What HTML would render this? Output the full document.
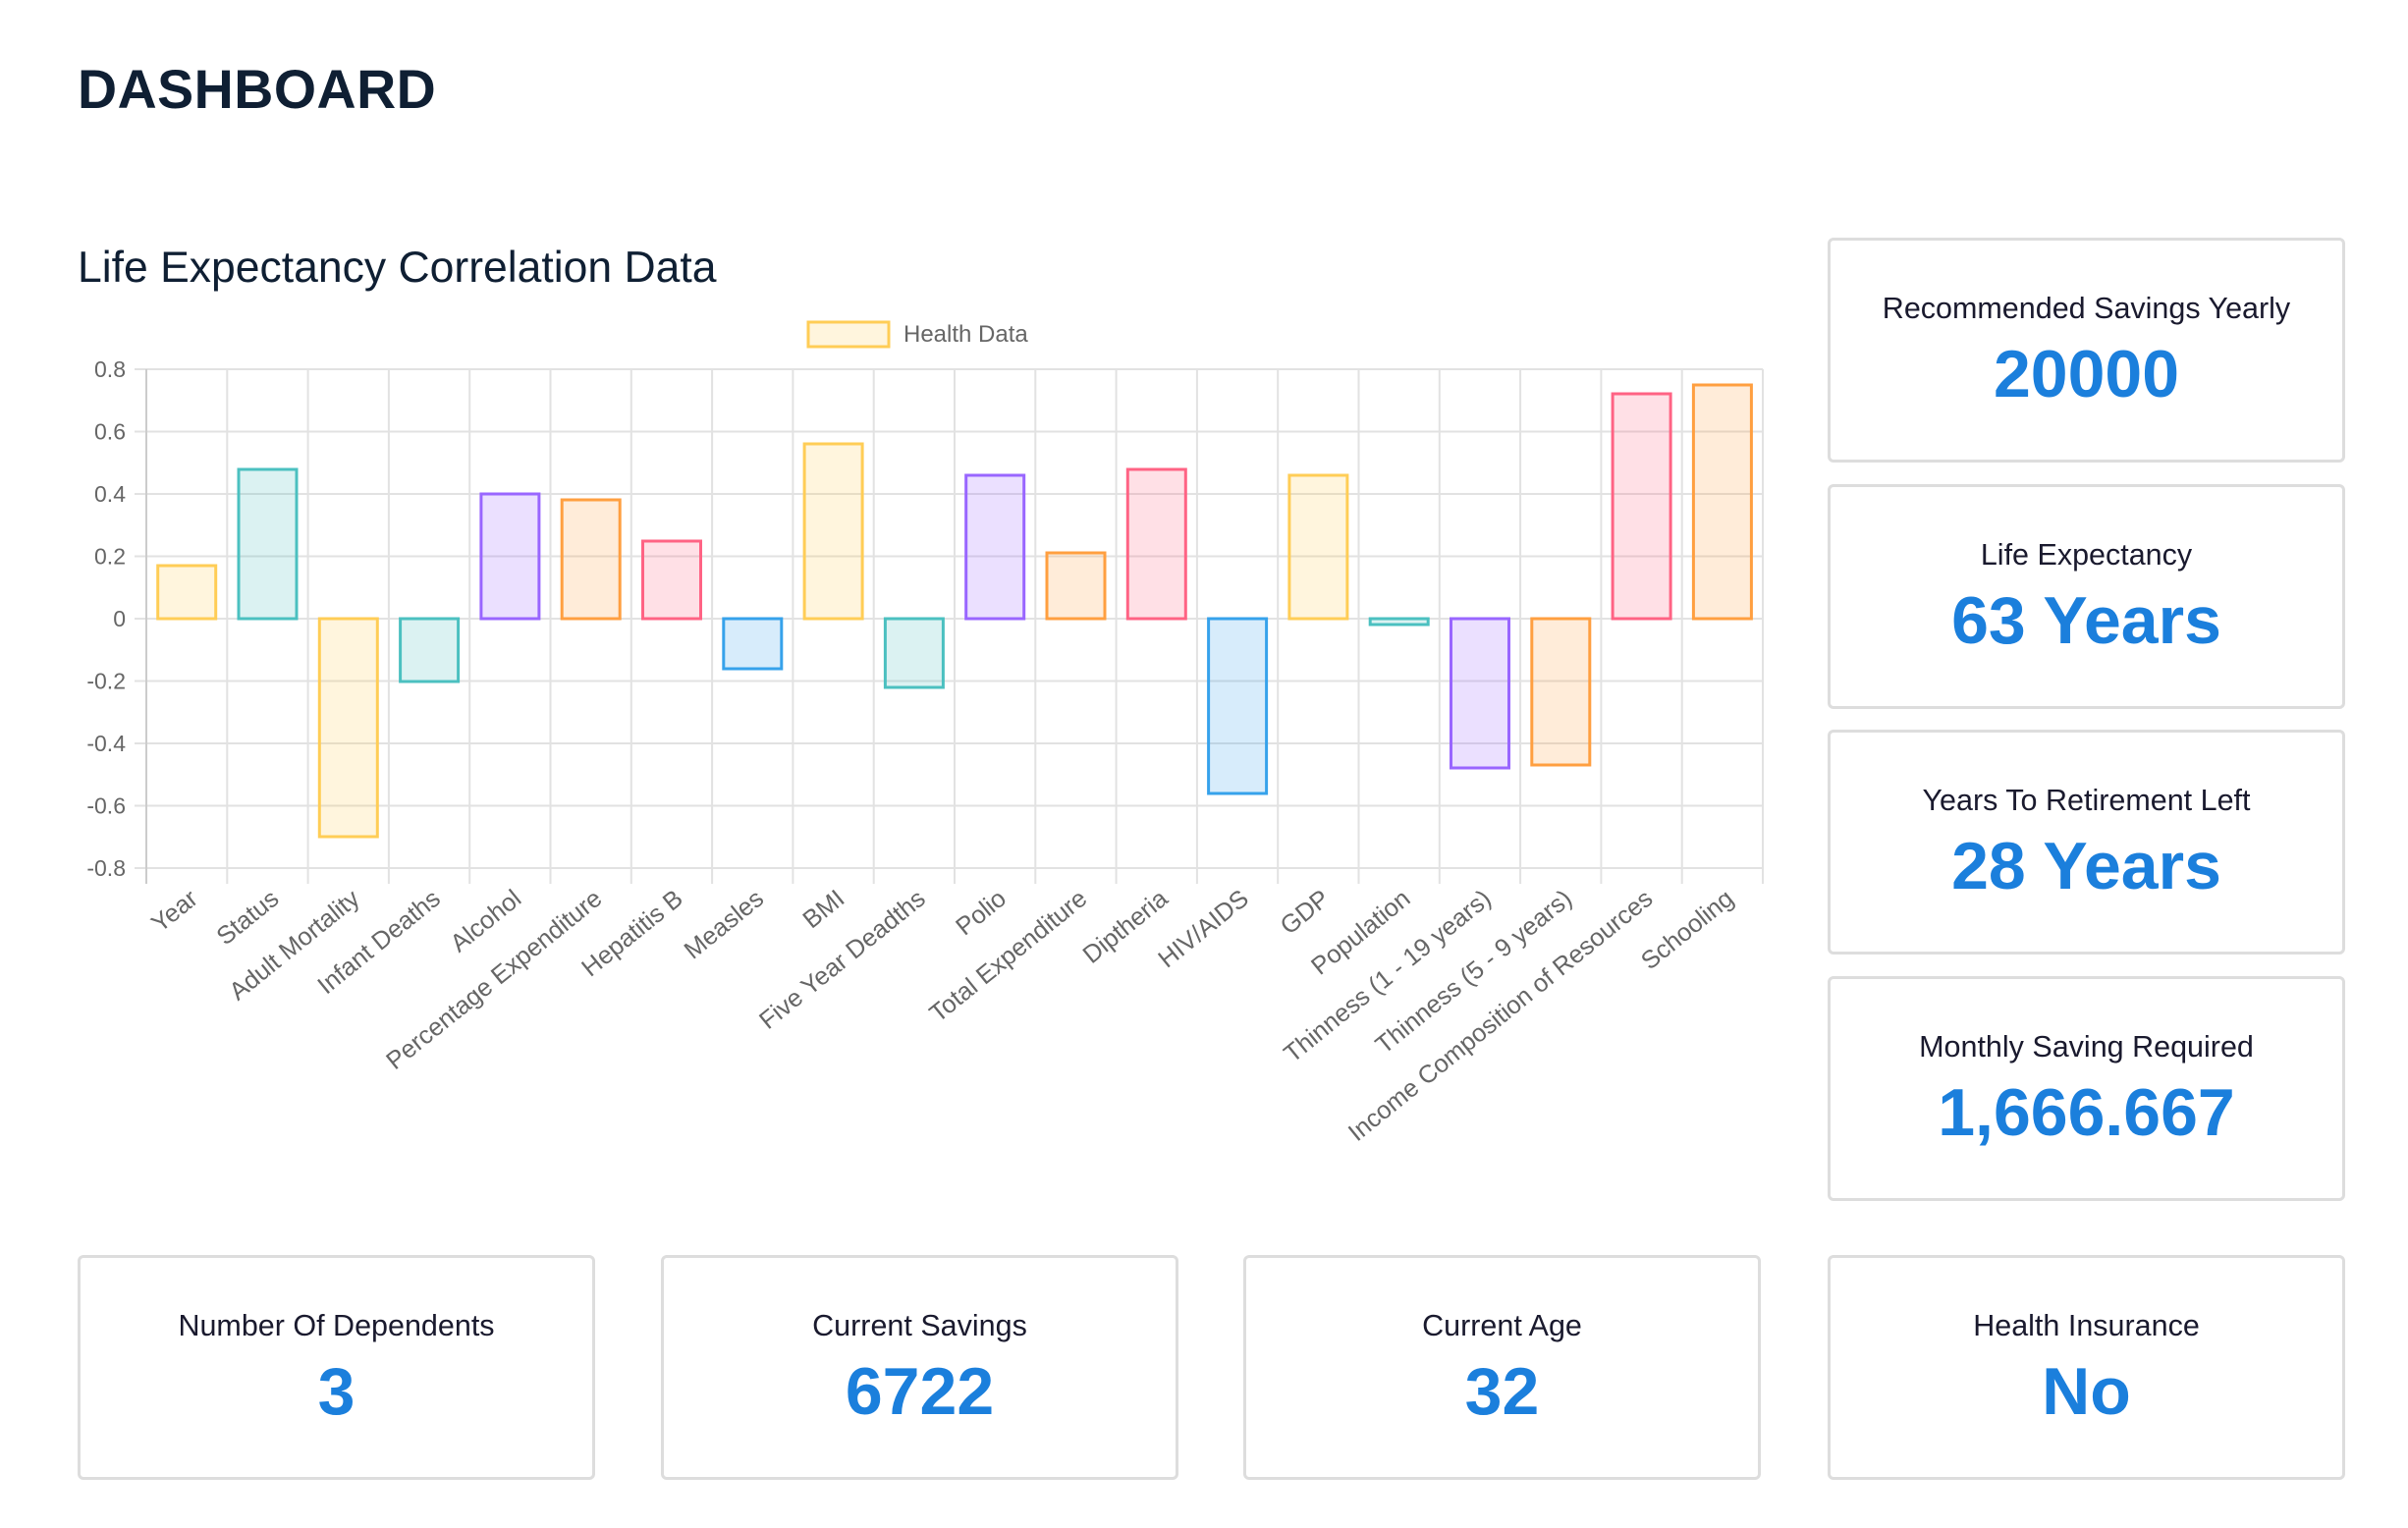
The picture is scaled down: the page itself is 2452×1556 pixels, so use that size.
<!DOCTYPE html>
<html><head><meta charset="utf-8"><style>
body{margin:0;background:#fff;width:2452px;height:1556px;overflow:hidden;font-family:"Liberation Sans",sans-serif;position:relative}
h1{position:absolute;left:79px;top:59px;margin:0;font-size:55.5px;font-weight:bold;color:#0f1f33;letter-spacing:0.5px}
.t{position:absolute;left:79px;top:248px;font-size:44.5px;color:#0f1f33}
.card{position:absolute;box-sizing:border-box;border:3px solid #ddd;border-radius:6px;width:527px;height:229px;text-align:center}
.card .l{margin-top:52px;font-size:30.5px;color:#1a1a2e}
.card .v{margin-top:10px;font-size:68px;font-weight:bold;color:#1b7fdc}
svg{position:absolute;left:0;top:0}
</style></head><body>
<h1>DASHBOARD</h1>
<div class="t">Life Expectancy Correlation Data</div>
<svg width="1830" height="1250" font-family="Liberation Sans, sans-serif">
<rect x="823" y="328" width="82" height="25" fill="rgba(255,205,86,0.2)" stroke="#ffcd56" stroke-width="3"/>
<text x="920" y="348" font-size="24" fill="#666">Health Data</text>
<g stroke="#e2e2e2" stroke-width="2">
<line x1="137" y1="376" x2="1795" y2="376"/><line x1="137" y1="439.5" x2="1795" y2="439.5"/><line x1="137" y1="503" x2="1795" y2="503"/><line x1="137" y1="566.5" x2="1795" y2="566.5"/><line x1="137" y1="630" x2="1795" y2="630"/><line x1="137" y1="693.5" x2="1795" y2="693.5"/><line x1="137" y1="757" x2="1795" y2="757"/><line x1="137" y1="820.5" x2="1795" y2="820.5"/><line x1="137" y1="884" x2="1795" y2="884"/>
<line x1="149" y1="376" x2="149" y2="900" stroke="#ccc"/><line x1="231.3" y1="376" x2="231.3" y2="900"/><line x1="313.6" y1="376" x2="313.6" y2="900"/><line x1="395.9" y1="376" x2="395.9" y2="900"/><line x1="478.2" y1="376" x2="478.2" y2="900"/><line x1="560.5" y1="376" x2="560.5" y2="900"/><line x1="642.8" y1="376" x2="642.8" y2="900"/><line x1="725.1" y1="376" x2="725.1" y2="900"/><line x1="807.4" y1="376" x2="807.4" y2="900"/><line x1="889.7" y1="376" x2="889.7" y2="900"/><line x1="972" y1="376" x2="972" y2="900"/><line x1="1054.3" y1="376" x2="1054.3" y2="900"/><line x1="1136.6" y1="376" x2="1136.6" y2="900"/><line x1="1218.9" y1="376" x2="1218.9" y2="900"/><line x1="1301.2" y1="376" x2="1301.2" y2="900"/><line x1="1383.5" y1="376" x2="1383.5" y2="900"/><line x1="1465.8" y1="376" x2="1465.8" y2="900"/><line x1="1548.1" y1="376" x2="1548.1" y2="900"/><line x1="1630.4" y1="376" x2="1630.4" y2="900"/><line x1="1712.7" y1="376" x2="1712.7" y2="900"/><line x1="1795" y1="376" x2="1795" y2="900"/>
</g>
<g font-size="23" fill="#666" text-anchor="end">
<text x="128" y="384">0.8</text><text x="128" y="447.5">0.6</text><text x="128" y="511">0.4</text><text x="128" y="574.5">0.2</text><text x="128" y="638">0</text><text x="128" y="701.5">-0.2</text><text x="128" y="765">-0.4</text><text x="128" y="828.5">-0.6</text><text x="128" y="892">-0.8</text>
</g>
<g stroke-width="3">
<rect x="160.7" y="576" width="59" height="54" fill="rgba(255,205,86,0.2)" stroke="#ffcd56"/>
<rect x="243" y="478" width="59" height="152" fill="rgba(75,192,192,0.2)" stroke="#4bc0c0"/>
<rect x="325.3" y="630" width="59" height="222" fill="rgba(255,205,86,0.2)" stroke="#ffcd56"/>
<rect x="407.6" y="630" width="59" height="64" fill="rgba(75,192,192,0.2)" stroke="#4bc0c0"/>
<rect x="489.9" y="503" width="59" height="127" fill="rgba(153,102,255,0.2)" stroke="#9966ff"/>
<rect x="572.2" y="509" width="59" height="121" fill="rgba(255,159,64,0.2)" stroke="#ff9f40"/>
<rect x="654.5" y="551" width="59" height="79" fill="rgba(255,99,132,0.2)" stroke="#ff6384"/>
<rect x="736.8" y="630" width="59" height="51" fill="rgba(54,162,235,0.2)" stroke="#36a2eb"/>
<rect x="819.1" y="452" width="59" height="178" fill="rgba(255,205,86,0.2)" stroke="#ffcd56"/>
<rect x="901.4" y="630" width="59" height="70" fill="rgba(75,192,192,0.2)" stroke="#4bc0c0"/>
<rect x="983.7" y="484" width="59" height="146" fill="rgba(153,102,255,0.2)" stroke="#9966ff"/>
<rect x="1066" y="563" width="59" height="67" fill="rgba(255,159,64,0.2)" stroke="#ff9f40"/>
<rect x="1148.3" y="478" width="59" height="152" fill="rgba(255,99,132,0.2)" stroke="#ff6384"/>
<rect x="1230.6" y="630" width="59" height="178" fill="rgba(54,162,235,0.2)" stroke="#36a2eb"/>
<rect x="1312.9" y="484" width="59" height="146" fill="rgba(255,205,86,0.2)" stroke="#ffcd56"/>
<rect x="1395.2" y="630" width="59" height="6" fill="rgba(75,192,192,0.2)" stroke="#4bc0c0"/>
<rect x="1477.5" y="630" width="59" height="152" fill="rgba(153,102,255,0.2)" stroke="#9966ff"/>
<rect x="1559.8" y="630" width="59" height="149" fill="rgba(255,159,64,0.2)" stroke="#ff9f40"/>
<rect x="1642.1" y="401" width="59" height="229" fill="rgba(255,99,132,0.2)" stroke="#ff6384"/>
<rect x="1724.4" y="392" width="59" height="238" fill="rgba(255,159,64,0.2)" stroke="#ff9f40"/>
</g>
<g font-size="25.5" fill="#666" text-anchor="end">
<text transform="translate(203,918) rotate(-39)">Year</text>
<text transform="translate(285.5,918) rotate(-39)">Status</text>
<text transform="translate(367.8,918) rotate(-39)">Adult Mortality</text>
<text transform="translate(450.1,918) rotate(-39)">Infant Deaths</text>
<text transform="translate(532.4,918) rotate(-39)">Alcohol</text>
<text transform="translate(614.7,918) rotate(-39)">Percentage Expenditure</text>
<text transform="translate(697,918) rotate(-39)">Hepatitis B</text>
<text transform="translate(779.3,918) rotate(-39)">Measles</text>
<text transform="translate(861.6,918) rotate(-39)">BMI</text>
<text transform="translate(943.9,918) rotate(-39)">Five Year Deadths</text>
<text transform="translate(1026.2,918) rotate(-39)">Polio</text>
<text transform="translate(1108.5,918) rotate(-39)">Total Expenditure</text>
<text transform="translate(1190.8,918) rotate(-39)">Diptheria</text>
<text transform="translate(1273.1,918) rotate(-39)">HIV/AIDS</text>
<text transform="translate(1355.4,918) rotate(-39)">GDP</text>
<text transform="translate(1437.7,918) rotate(-39)">Population</text>
<text transform="translate(1520,918) rotate(-39)">Thinness (1 - 19 years)</text>
<text transform="translate(1602.3,918) rotate(-39)">Thinness (5 - 9 years)</text>
<text transform="translate(1684.6,918) rotate(-39)">Income Composition of Resources</text>
<text transform="translate(1766.9,918) rotate(-39)">Schooling</text>
</g>
</svg>
<div class="card" style="left:1861px;top:242px"><div class="l">Recommended Savings Yearly</div><div class="v">20000</div></div>
<div class="card" style="left:1861px;top:493px"><div class="l">Life Expectancy</div><div class="v">63 Years</div></div>
<div class="card" style="left:1861px;top:743px"><div class="l">Years To Retirement Left</div><div class="v">28 Years</div></div>
<div class="card" style="left:1861px;top:994px"><div class="l">Monthly Saving Required</div><div class="v">1,666.667</div></div>
<div class="card" style="left:79px;top:1278px"><div class="l">Number Of Dependents</div><div class="v">3</div></div>
<div class="card" style="left:673px;top:1278px"><div class="l">Current Savings</div><div class="v">6722</div></div>
<div class="card" style="left:1266px;top:1278px"><div class="l">Current Age</div><div class="v">32</div></div>
<div class="card" style="left:1861px;top:1278px"><div class="l">Health Insurance</div><div class="v">No</div></div>
</body></html>
